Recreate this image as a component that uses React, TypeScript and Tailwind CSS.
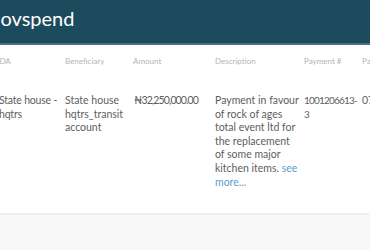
const columns = [
  { key: "mda", label: "MDA", width: "w-[73px]" },
  { key: "beneficiary", label: "Beneficiary", width: "w-[68px]" },
  { key: "amount", label: "Amount", width: "w-[82px]" },
  { key: "description", label: "Description", width: "w-[89px]" },
  { key: "payment", label: "Payment #", width: "w-[58px]" },
  { key: "date", label: "Payment Date", width: "w-[80px]" },
];

const mdaLines = ["State house -", "hqtrs"];
const beneficiaryLines = ["State house", "hqtrs_transit", "account"];
const descriptionLines = [
  "Payment in favour",
  "of rock of ages",
  "total event ltd for",
  "the replacement",
  "of some major",
];

export default function App() {
  return (
    <div className="w-[370px] h-[250px] overflow-hidden bg-[#f8f8f8] font-['Lato',sans-serif]">
      {/* Top bar */}
      <div className="h-[45px] bg-[#1c4b5e] border-b-2 border-[#4a7183] pt-[8px]">
        <h1 className="ml-[-14px] text-[20px] leading-[20px] text-white">Govspend</h1>
      </div>

      {/* Table card */}
      <div className="bg-white h-[170px] border-b-2 border-[#eeeeee] overflow-hidden">
        <div className="ml-[-8px] flex pt-[11px] text-[8px] leading-[10px] text-[#b3b3b3] whitespace-nowrap">
          {columns.map((c) => (
            <div key={c.key} className={`${c.width} shrink-0`}>{c.label}</div>
          ))}
        </div>
        <div className="ml-[-8px] flex pt-[28px] text-[10.5px] leading-[13.6px] text-[#5e5e5e] whitespace-nowrap">
          <div className="w-[73px] shrink-0 pl-[7px] tracking-[-0.2px]">
            {mdaLines.map((l) => <div key={l}>{l}</div>)}
          </div>
          <div className="w-[68px] shrink-0">
            {beneficiaryLines.map((l) => <div key={l}>{l}</div>)}
          </div>
          <div className="w-[82px] shrink-0 pl-px tracking-[-0.9px]">₦32,250,000.00</div>
          <div className="w-[89px] shrink-0">
            {descriptionLines.map((l) => <div key={l}>{l}</div>)}
            <div>kitchen items. <span className="text-[#5b9bd1]">see</span></div>
            <div className="text-[#5b9bd1]">more...</div>
          </div>
          <div className="w-[58px] shrink-0 text-[10px] tracking-[-0.8px]">
            <div>1001206613-</div>
            <div>3</div>
          </div>
          <div className="w-[80px] shrink-0">07/11/2019</div>
        </div>
      </div>
    </div>
  );
}
